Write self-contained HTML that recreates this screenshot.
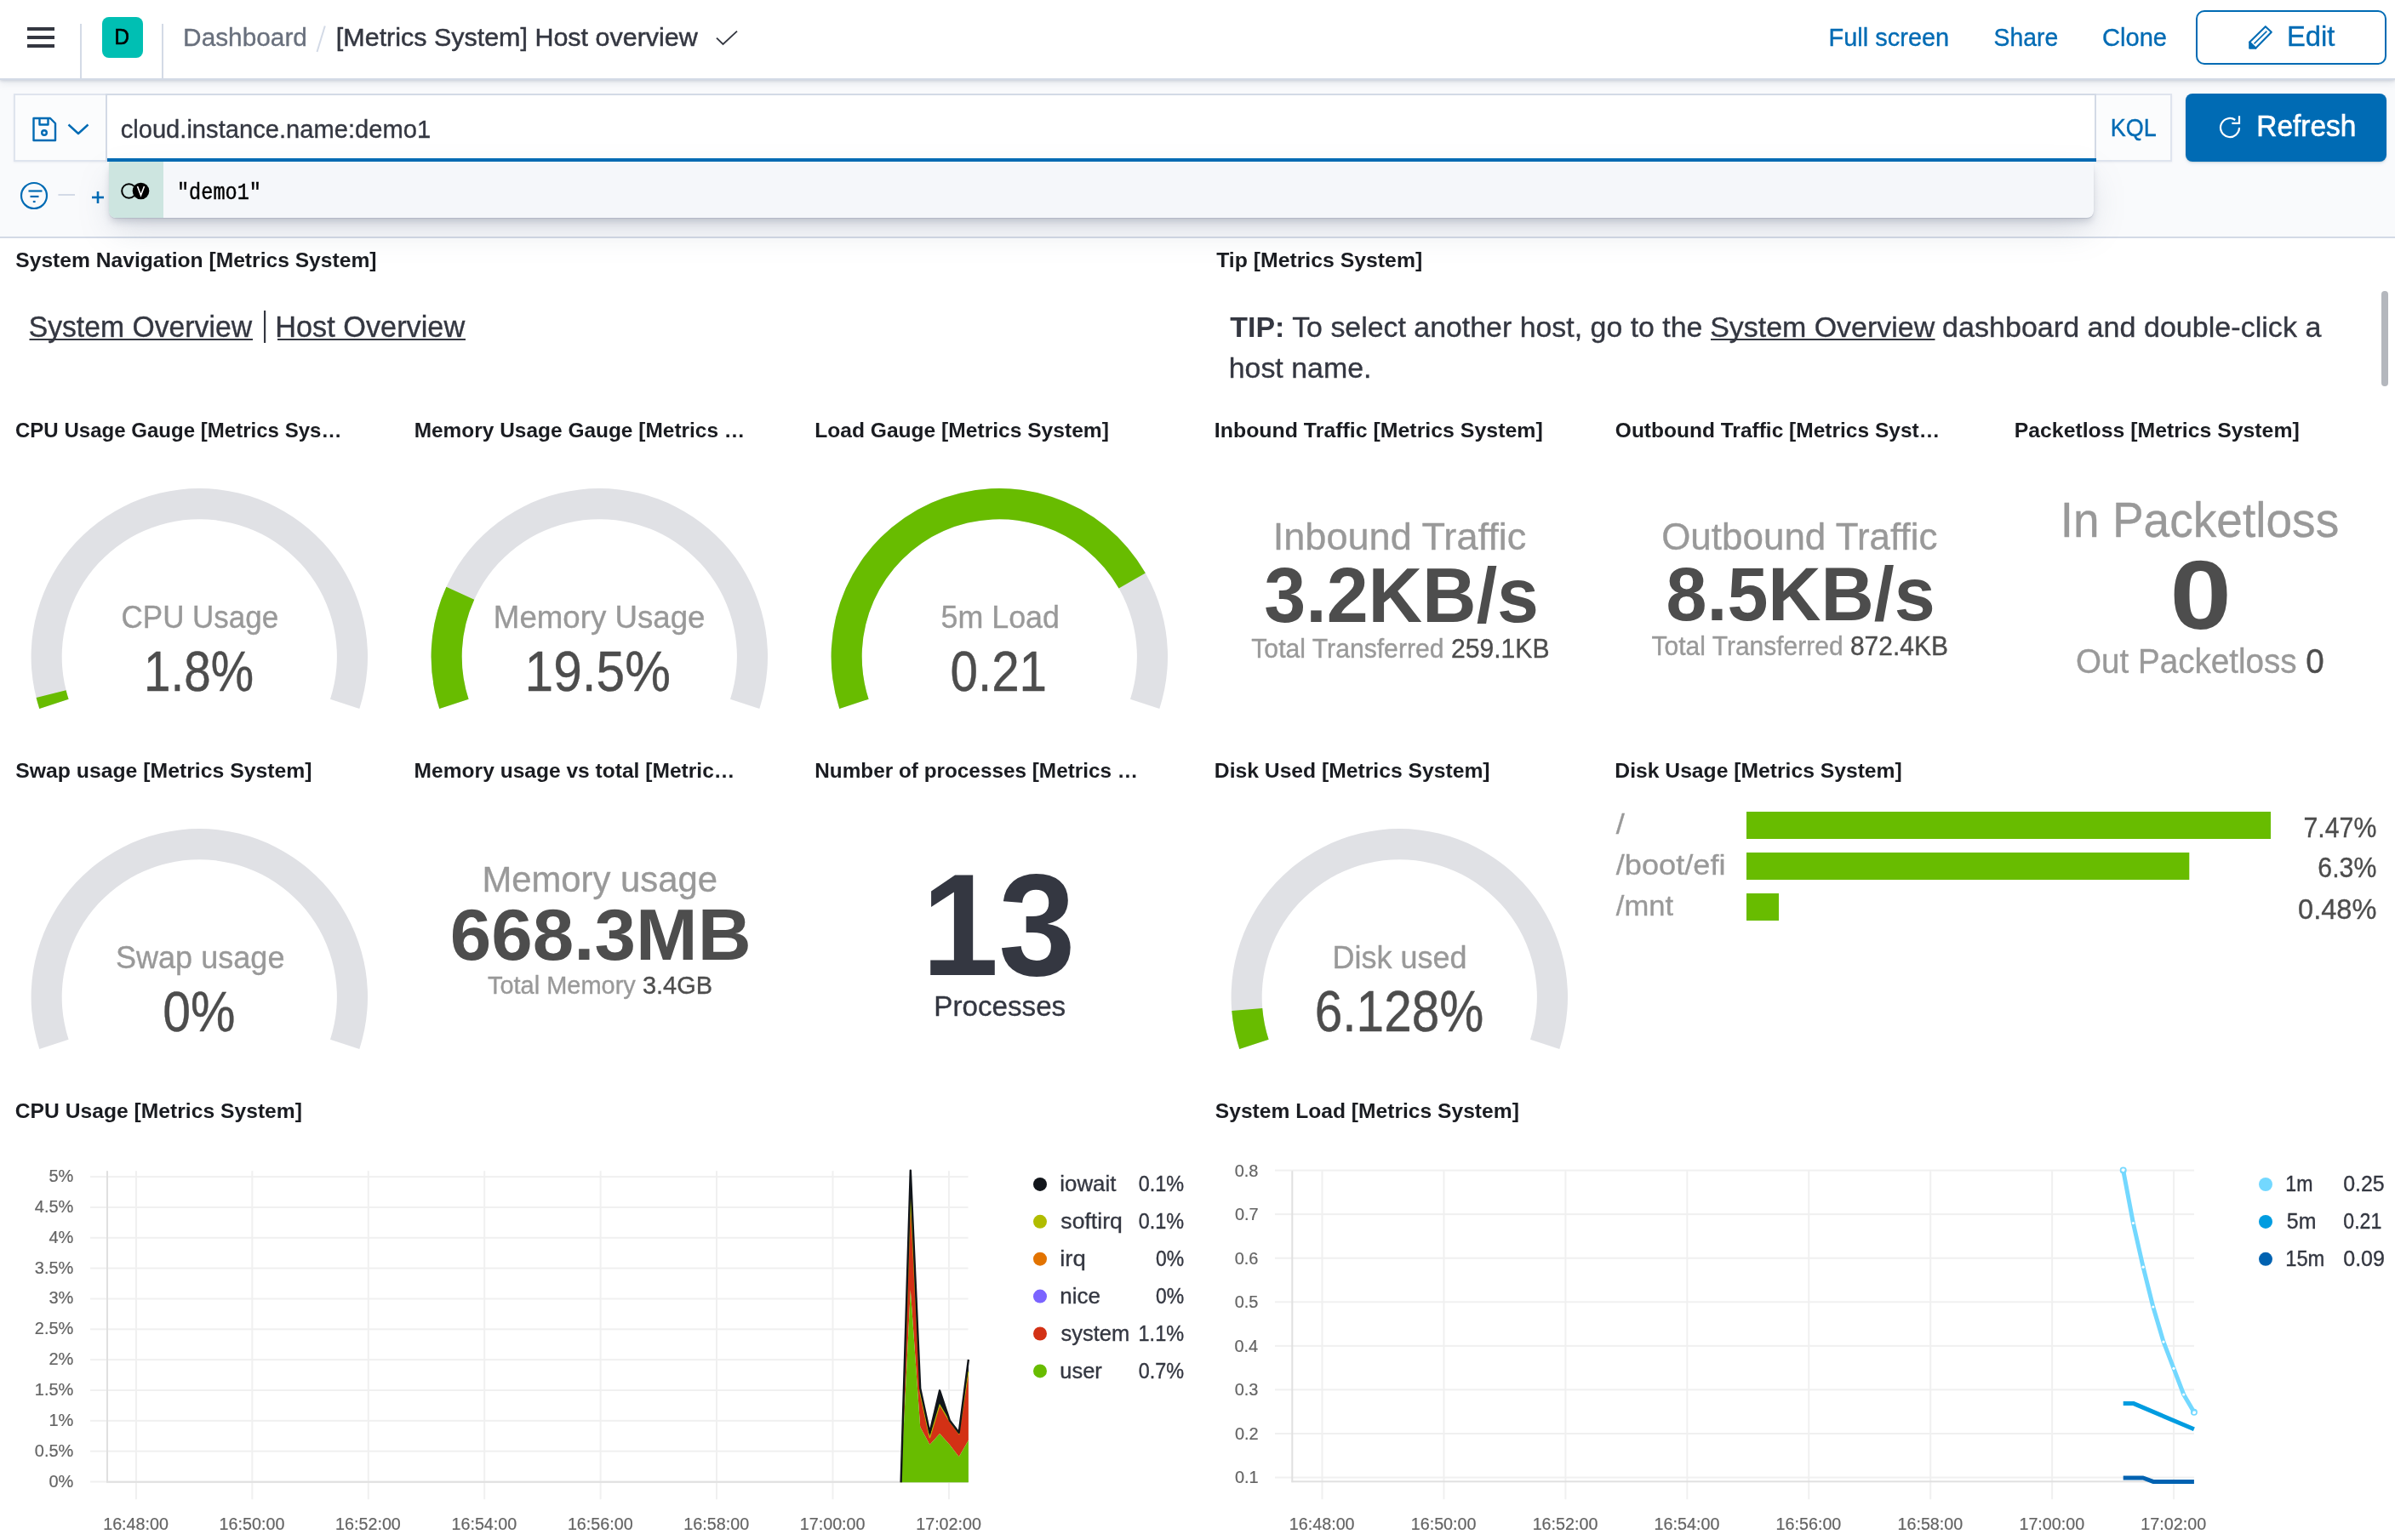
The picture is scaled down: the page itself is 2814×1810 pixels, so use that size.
<!DOCTYPE html>
<html><head><meta charset="utf-8"><title>[Metrics System] Host overview - Kibana</title>
<style>
html,body{margin:0;padding:0;width:2814px;height:1810px;overflow:hidden;background:#fff;font-family:"Liberation Sans",sans-serif}
.a{position:absolute;box-sizing:border-box}
svg{position:absolute;left:0;top:0;will-change:transform}
</style></head><body>
<div class="a" style="left:0;top:92px;width:2814px;height:188px;background:#f9fafc;border-bottom:2px solid #d3dae6"></div>
<div class="a" style="left:0;top:0;width:2814px;height:94px;background:#fff;border-bottom:2px solid #d3dae6;box-shadow:0 1px 3px rgba(130,140,160,.30),0 4px 8px rgba(130,140,160,.16)"></div>
<div class="a" style="left:16px;top:110px;width:110px;height:80px;background:#fbfcfd;border:2px solid #dfe4ee;border-right:none;box-shadow:0 1px 2px rgba(152,162,179,.15)"></div>
<div class="a" style="left:2462px;top:110px;width:90px;height:80px;background:#fbfcfd;border:2px solid #dfe4ee;border-left:none;box-shadow:0 1px 2px rgba(152,162,179,.15)"></div>
<div class="a" style="left:124px;top:110px;width:2339px;height:80px;background:#fff;border:2px solid #d3dae6;border-bottom:none;border-right:2px solid #d3dae6"></div>
<div class="a" style="left:126px;top:186px;width:2337px;height:4px;background:#006bb4"></div>
<div class="a" style="left:2568px;top:110px;width:236px;height:80px;background:#006bb4;border-radius:8px;box-shadow:0 1px 2px rgba(0,0,0,.12),0 2px 4px rgba(0,107,180,.10)"></div>
<div class="a" style="left:128px;top:190px;width:2332px;height:66px;background:#f5f7fa;border-radius:0 0 8px 8px;box-shadow:0 1px 1px rgba(120,130,150,.25),0 6px 10px -2px rgba(120,130,150,.35),0 16px 40px -6px rgba(120,130,150,.28)"></div>
<div class="a" style="left:128px;top:190px;width:64px;height:66px;background:#cde5e0;border-radius:0 0 0 8px"></div>
<svg width="2814" height="1810" viewBox="0 0 2814 1810"><defs><filter id="sh" x="-10%" y="-30%" width="120%" height="160%"><feGaussianBlur stdDeviation="2"/></filter></defs>
<rect x="32" y="32" width="32" height="4" fill="#343741"/>
<rect x="32" y="42" width="32" height="4" fill="#343741"/>
<rect x="32" y="52" width="32" height="4" fill="#343741"/>
<rect x="94" y="28" width="2" height="64" fill="#d3dae6"/>
<rect x="190" y="28" width="2" height="64" fill="#d3dae6"/>
<rect x="120" y="20" width="48" height="48" rx="8" fill="#00bfb3"/>
<line x1="381.8" y1="30.5" x2="372.5" y2="61" stroke="#d3dae6" stroke-width="2"/>
<polyline points="842,44.6 849.5,52 866,36.6" fill="none" stroke="#343741" stroke-width="1.9"/>
<rect x="2581" y="15" width="222" height="62" rx="9" fill="#000" opacity=".06" filter="url(#sh)"/><rect x="2581" y="13" width="222" height="62" rx="9" fill="#fff" stroke="#006bb4" stroke-width="2"/>
<path d="M2643.2,49.6 L2661.8,31.2 L2668.8,37.8 L2650.4,56.6 Z" fill="none" stroke="#006bb4" stroke-width="2.1" stroke-linejoin="round"/><path d="M2642.2,48.6 L2651.5,57.8 L2643.5,57.8 Q2642.2,57.8 2642.2,56.5 Z" fill="#006bb4"/><line x1="2648.5" y1="51.4" x2="2663.4" y2="36.6" stroke="#006bb4" stroke-width="1.5"/>
<g fill="none" stroke="#006bb4" stroke-width="2.4" stroke-linejoin="round"><path d="M39.5,139 L59,139 L65,145 L65,165 L39.5,165 Z"/><path d="M46.5,139 L46.5,146.5 L56.5,146.5 L56.5,139"/><circle cx="52" cy="156" r="2.8"/><polyline points="80.5,146.5 92,157 103.5,146.5"/></g>
<g fill="none" stroke="#006bb4" stroke-width="2.2"><circle cx="40" cy="230" r="15"/><line x1="33.5" y1="224.5" x2="49.5" y2="224.5"/><line x1="35.5" y1="231" x2="45.5" y2="231"/><line x1="38.8" y1="237" x2="41.6" y2="237"/></g>
<line x1="68.4" y1="229" x2="88" y2="229" stroke="#d3dae6" stroke-width="2"/>
<g stroke="#006bb4" stroke-width="2.6"><line x1="108" y1="232" x2="122" y2="232"/><line x1="115" y1="225" x2="115" y2="239"/></g>
<g fill="none" stroke="#fff" stroke-width="2.2"><path d="M2626.3,141 A11,11 0 1 0 2631,150"/><polyline points="2631,136.2 2631,144.8 2622.3,144.8"/></g>
<circle cx="151.5" cy="224.5" r="8.3" fill="none" stroke="#000" stroke-width="2"/><circle cx="165.5" cy="224.5" r="9.8" fill="#000"/><polyline points="161.5,219 165.5,229.5 169.5,219" fill="none" stroke="#fff" stroke-width="1.6"/>
<rect x="34.5" y="398" width="262.5" height="2" fill="#343741"/>
<rect x="326" y="398" width="221" height="2" fill="#343741"/>
<rect x="310" y="365" width="2.2" height="38" fill="#343741"/>
<rect x="2010" y="398" width="263.5" height="2" fill="#343741"/>
<rect x="2798" y="342" width="8" height="112" rx="4" fill="#b4b7bd"/>
<path d="M46.28,832.89 A197.7,197.7 0 1 1 422.32,832.89 L387.99,821.74 A161.6,161.6 0 1 0 80.61,821.74 Z" fill="#e0e1e5"/>
<path d="M46.28,832.89 A197.7,197.7 0 0 1 42.56,819.96 L77.57,811.17 A161.6,161.6 0 0 0 80.61,821.74 Z" fill="#68bc00"/>
<path d="M516.28,832.89 A197.7,197.7 0 1 1 892.32,832.89 L857.99,821.74 A161.6,161.6 0 1 0 550.61,821.74 Z" fill="#e0e1e5"/>
<path d="M516.28,832.89 A197.7,197.7 0 0 1 524.4,689.82 L557.25,704.79 A161.6,161.6 0 0 0 550.61,821.74 Z" fill="#68bc00"/>
<path d="M986.28,832.89 A197.7,197.7 0 1 1 1362.32,832.89 L1327.99,821.74 A161.6,161.6 0 1 0 1020.61,821.74 Z" fill="#e0e1e5"/>
<path d="M986.28,832.89 A197.7,197.7 0 0 1 1345.86,673.55 L1314.53,691.49 A161.6,161.6 0 0 0 1020.61,821.74 Z" fill="#68bc00"/>
<path d="M46.28,1232.89 A197.7,197.7 0 1 1 422.32,1232.89 L387.99,1221.74 A161.6,161.6 0 1 0 80.61,1221.74 Z" fill="#e0e1e5"/>
<path d="M1456.28,1232.89 A197.7,197.7 0 1 1 1832.32,1232.89 L1797.99,1221.74 A161.6,161.6 0 1 0 1490.61,1221.74 Z" fill="#e0e1e5"/>
<path d="M1456.28,1232.89 A197.7,197.7 0 0 1 1447.26,1188 L1483.24,1185.04 A161.6,161.6 0 0 0 1490.61,1221.74 Z" fill="#68bc00"/>
<rect x="2052" y="954" width="616" height="32" fill="#68bc00"/>
<rect x="2052" y="1002" width="520.3" height="32" fill="#68bc00"/>
<rect x="2052" y="1050" width="38" height="32" fill="#68bc00"/>
<rect x="106" y="1382.1" width="1031.5" height="2" fill="#f0f0f0"/>
<rect x="106" y="1417.94" width="1031.5" height="2" fill="#f0f0f0"/>
<rect x="106" y="1453.78" width="1031.5" height="2" fill="#f0f0f0"/>
<rect x="106" y="1489.62" width="1031.5" height="2" fill="#f0f0f0"/>
<rect x="106" y="1525.46" width="1031.5" height="2" fill="#f0f0f0"/>
<rect x="106" y="1561.3" width="1031.5" height="2" fill="#f0f0f0"/>
<rect x="106" y="1597.14" width="1031.5" height="2" fill="#f0f0f0"/>
<rect x="106" y="1632.98" width="1031.5" height="2" fill="#f0f0f0"/>
<rect x="106" y="1668.82" width="1031.5" height="2" fill="#f0f0f0"/>
<rect x="106" y="1704.66" width="1031.5" height="2" fill="#f0f0f0"/>
<rect x="106" y="1740.5" width="1031.5" height="2" fill="#f0f0f0"/>
<rect x="158.9" y="1376.2" width="2" height="386" fill="#f0f0f0"/>
<rect x="295.33" y="1376.2" width="2" height="386" fill="#f0f0f0"/>
<rect x="431.76" y="1376.2" width="2" height="386" fill="#f0f0f0"/>
<rect x="568.19" y="1376.2" width="2" height="386" fill="#f0f0f0"/>
<rect x="704.62" y="1376.2" width="2" height="386" fill="#f0f0f0"/>
<rect x="841.05" y="1376.2" width="2" height="386" fill="#f0f0f0"/>
<rect x="977.48" y="1376.2" width="2" height="386" fill="#f0f0f0"/>
<rect x="1113.91" y="1376.2" width="2" height="386" fill="#f0f0f0"/>
<rect x="125" y="1376.2" width="2" height="366" fill="#e0e0e0"/>
<rect x="125" y="1740.8" width="1012.5" height="2" fill="#e0e0e0"/>
<polygon points="1058.6,1742.2 1069.8,1375.6 1081.2,1631.7 1092.4,1683.7 1104.1,1634.3 1115.8,1669.4 1126.7,1683.7 1137.9,1597.9 1137.9,1612.2 1126.7,1685 1115.8,1670.7 1104.1,1651.2 1092.4,1690.2 1081.2,1638.2 1069.8,1406.8 1058.6,1742.2" fill="#11151a"/>
<polygon points="1058.6,1742.2 1069.8,1406.8 1081.2,1638.2 1092.4,1690.2 1104.1,1651.2 1115.8,1670.7 1126.7,1685 1137.9,1612.2 1137.9,1692.8 1126.7,1712.3 1115.8,1698 1104.1,1685 1092.4,1698 1081.2,1677.2 1069.8,1516 1058.6,1742.2" fill="#d33115"/>
<polygon points="1058.6,1742.2 1069.8,1516 1081.2,1677.2 1092.4,1698 1104.1,1685 1115.8,1698 1126.7,1712.3 1137.9,1692.8 1137.9,1742.2 1126.7,1742.2 1115.8,1742.2 1104.1,1742.2 1092.4,1742.2 1081.2,1742.2 1069.8,1742.2 1058.6,1742.2" fill="#68bc00"/>
<polyline points="1058.6,1742.2 1069.8,1406.8 1081.2,1638.2 1092.4,1690.2 1104.1,1651.2 1115.8,1670.7 1126.7,1685 1137.9,1612.2" fill="none" stroke="#b0bc00" stroke-width="1.2"/>
<polyline points="1058.6,1742.2 1069.8,1375.6 1081.2,1631.7 1092.4,1683.7 1104.1,1634.3 1115.8,1669.4 1126.7,1683.7 1137.9,1597.9" fill="none" stroke="#11151a" stroke-width="2.4" stroke-linejoin="round"/>
<circle cx="1222" cy="1391.9" r="8" fill="#11151a"/>
<circle cx="1222" cy="1435.8" r="8" fill="#b0bc00"/>
<circle cx="1222" cy="1479.7" r="8" fill="#e27300"/>
<circle cx="1222" cy="1523.6" r="8" fill="#7b64ff"/>
<circle cx="1222" cy="1567.5" r="8" fill="#d33115"/>
<circle cx="1222" cy="1611.4" r="8" fill="#68bc00"/>
<rect x="1498" y="1374.6" width="1080" height="2" fill="#f0f0f0"/>
<rect x="1498" y="1426.16" width="1080" height="2" fill="#f0f0f0"/>
<rect x="1498" y="1477.72" width="1080" height="2" fill="#f0f0f0"/>
<rect x="1498" y="1529.28" width="1080" height="2" fill="#f0f0f0"/>
<rect x="1498" y="1580.84" width="1080" height="2" fill="#f0f0f0"/>
<rect x="1498" y="1632.4" width="1080" height="2" fill="#f0f0f0"/>
<rect x="1498" y="1683.96" width="1080" height="2" fill="#f0f0f0"/>
<rect x="1498" y="1735.52" width="1080" height="2" fill="#f0f0f0"/>
<rect x="1552.5" y="1376.2" width="2" height="386" fill="#f0f0f0"/>
<rect x="1695.44" y="1376.2" width="2" height="386" fill="#f0f0f0"/>
<rect x="1838.38" y="1376.2" width="2" height="386" fill="#f0f0f0"/>
<rect x="1981.32" y="1376.2" width="2" height="386" fill="#f0f0f0"/>
<rect x="2124.26" y="1376.2" width="2" height="386" fill="#f0f0f0"/>
<rect x="2267.2" y="1376.2" width="2" height="386" fill="#f0f0f0"/>
<rect x="2410.14" y="1376.2" width="2" height="386" fill="#f0f0f0"/>
<rect x="2553.08" y="1376.2" width="2" height="386" fill="#f0f0f0"/>
<rect x="1517.3" y="1376.2" width="2" height="366" fill="#e0e0e0"/>
<rect x="1517.3" y="1740.3" width="1060.7" height="2" fill="#e0e0e0"/>
<polyline points="2494.7,1737 2518.1,1737 2529.8,1741.4 2577.9,1741.4" fill="none" stroke="#0062b1" stroke-width="5" stroke-linejoin="round"/>
<polyline points="2494.7,1649.4 2506.4,1649.4 2577.9,1679.8" fill="none" stroke="#009ce0" stroke-width="5" stroke-linejoin="round"/>
<polyline points="2494.7,1375.6 2506.4,1437.5 2518.1,1489.2 2529.8,1536 2542,1577.1 2554,1608.3 2565.7,1639 2577.9,1659.8" fill="none" stroke="#73d8ff" stroke-width="5" stroke-linejoin="round"/>
<circle cx="2494.7" cy="1375.6" r="1.6" fill="#fff"/>
<circle cx="2506.4" cy="1437.5" r="1.6" fill="#fff"/>
<circle cx="2518.1" cy="1489.2" r="1.6" fill="#fff"/>
<circle cx="2529.8" cy="1536" r="1.6" fill="#fff"/>
<circle cx="2542" cy="1577.1" r="1.6" fill="#fff"/>
<circle cx="2554" cy="1608.3" r="1.6" fill="#fff"/>
<circle cx="2565.7" cy="1639" r="1.6" fill="#fff"/>
<circle cx="2577.9" cy="1659.8" r="1.6" fill="#fff"/>
<circle cx="2494.7" cy="1375.6" r="3.2" fill="none" stroke="#73d8ff" stroke-width="1.6"/>
<circle cx="2577.9" cy="1659.8" r="3.2" fill="none" stroke="#73d8ff" stroke-width="1.6"/>
<circle cx="2662" cy="1392" r="8" fill="#73d8ff"/>
<circle cx="2662" cy="1435.9" r="8" fill="#009ce0"/>
<circle cx="2662" cy="1479.8" r="8" fill="#0062b1"/>
<text font-family="Liberation Sans" font-size="26.16" font-weight="400" fill="#000" stroke="#000" stroke-width="0.7" transform="translate(134.57,52) scale(0.9237,1)" xml:space="preserve">D</text>
<text font-family="Liberation Sans" font-size="29.65" font-weight="400" fill="#69707d"  stroke="#69707d" stroke-width="0.348" transform="translate(215.11,53.8) scale(1.0055,1)" xml:space="preserve">Dashboard</text>
<text font-family="Liberation Sans" font-size="29.65" font-weight="400" fill="#343741" stroke="#343741" stroke-width="0.5" transform="translate(394.87,53.8) scale(1.0281,1)" xml:space="preserve">[Metrics System] Host overview</text>
<text font-family="Liberation Sans" font-size="30.38" font-weight="400" fill="#006bb4"  stroke="#006bb4" stroke-width="0.367" transform="translate(2148.58,54.3) scale(0.9534,1)" xml:space="preserve">Full screen</text>
<text font-family="Liberation Sans" font-size="30.38" font-weight="400" fill="#006bb4"  stroke="#006bb4" stroke-width="0.375" transform="translate(2342.57,54.3) scale(0.9333,1)" xml:space="preserve">Share</text>
<text font-family="Liberation Sans" font-size="30.38" font-weight="400" fill="#006bb4"  stroke="#006bb4" stroke-width="0.365" transform="translate(2469.94,54.3) scale(0.9589,1)" xml:space="preserve">Clone</text>
<text font-family="Liberation Sans" font-size="34.01" font-weight="400" fill="#006bb4"  stroke="#006bb4" stroke-width="0.363" transform="translate(2686.98,53.9) scale(0.9632,1)" xml:space="preserve">Edit</text>
<text font-family="Liberation Sans" font-size="28.9" font-weight="400" fill="#343741"  stroke="#343741" stroke-width="0.347" transform="translate(141.63,161.9) scale(1.0088,1)" xml:space="preserve">cloud.instance.name:demo1</text>
<text font-family="Liberation Sans" font-size="29.94" font-weight="400" fill="#006bb4"  stroke="#006bb4" stroke-width="0.388" transform="translate(2479.64,159.8) scale(0.9024,1)" xml:space="preserve">KQL</text>
<text font-family="Liberation Sans" font-size="35.32" font-weight="400" fill="#ffffff" stroke="#ffffff" stroke-width="0.7" transform="translate(2651.33,160.3) scale(0.9456,1)" xml:space="preserve">Refresh</text>
<text font-family="Liberation Mono" font-size="27.33" font-weight="400" fill="#000" stroke="#000" stroke-width="0.45" transform="translate(207.93,234) scale(0.8636,1)" xml:space="preserve">&quot;demo1&quot;</text>
<text font-family="Liberation Sans" font-size="24.71" font-weight="700" fill="#1a1c21"  transform="translate(18.31,314.4) scale(0.9972,1)" xml:space="preserve">System Navigation [Metrics System]</text>
<text font-family="Liberation Sans" font-size="24.71" font-weight="700" fill="#1a1c21"  transform="translate(1429.15,314.4) scale(1.0035,1)" xml:space="preserve">Tip [Metrics System]</text>
<text font-family="Liberation Sans" font-size="24.71" font-weight="700" fill="#1a1c21"  transform="translate(17.94,513.7) scale(0.9736,1)" xml:space="preserve">CPU Usage Gauge [Metrics Sys…</text>
<text font-family="Liberation Sans" font-size="24.71" font-weight="700" fill="#1a1c21"  transform="translate(486.63,513.7) scale(0.9899,1)" xml:space="preserve">Memory Usage Gauge [Metrics …</text>
<text font-family="Liberation Sans" font-size="24.71" font-weight="700" fill="#1a1c21"  transform="translate(957.22,513.7) scale(0.9956,1)" xml:space="preserve">Load Gauge [Metrics System]</text>
<text font-family="Liberation Sans" font-size="24.71" font-weight="700" fill="#1a1c21"  transform="translate(1426.81,513.7) scale(1.0077,1)" xml:space="preserve">Inbound Traffic [Metrics System]</text>
<text font-family="Liberation Sans" font-size="24.71" font-weight="700" fill="#1a1c21"  transform="translate(1897.82,513.7) scale(0.9926,1)" xml:space="preserve">Outbound Traffic [Metrics Syst…</text>
<text font-family="Liberation Sans" font-size="24.71" font-weight="700" fill="#1a1c21"  transform="translate(2366.71,513.7) scale(1.0044,1)" xml:space="preserve">Packetloss [Metrics System]</text>
<text font-family="Liberation Sans" font-size="24.71" font-weight="700" fill="#1a1c21"  transform="translate(18.2,913.7) scale(1.0031,1)" xml:space="preserve">Swap usage [Metrics System]</text>
<text font-family="Liberation Sans" font-size="24.71" font-weight="700" fill="#1a1c21"  transform="translate(486.62,913.7) scale(0.9950,1)" xml:space="preserve">Memory usage vs total [Metric…</text>
<text font-family="Liberation Sans" font-size="24.71" font-weight="700" fill="#1a1c21"  transform="translate(957.24,913.7) scale(0.9849,1)" xml:space="preserve">Number of processes [Metrics …</text>
<text font-family="Liberation Sans" font-size="24.71" font-weight="700" fill="#1a1c21"  transform="translate(1426.82,913.7) scale(0.9997,1)" xml:space="preserve">Disk Used [Metrics System]</text>
<text font-family="Liberation Sans" font-size="24.71" font-weight="700" fill="#1a1c21"  transform="translate(1897.32,913.7) scale(0.9993,1)" xml:space="preserve">Disk Usage [Metrics System]</text>
<text font-family="Liberation Sans" font-size="24.71" font-weight="700" fill="#1a1c21"  transform="translate(17.71,1313.7) scale(0.9985,1)" xml:space="preserve">CPU Usage [Metrics System]</text>
<text font-family="Liberation Sans" font-size="24.71" font-weight="700" fill="#1a1c21"  transform="translate(1427.81,1313.7) scale(0.9966,1)" xml:space="preserve">System Load [Metrics System]</text>
<text font-family="Liberation Sans" font-size="34.88" font-weight="400" fill="#343741"  stroke="#343741" stroke-width="0.362" transform="translate(33.65,396) scale(0.9676,1)" xml:space="preserve">System Overview</text>
<text font-family="Liberation Sans" font-size="34.88" font-weight="400" fill="#343741"  stroke="#343741" stroke-width="0.356" transform="translate(323.26,396) scale(0.9836,1)" xml:space="preserve">Host Overview</text>
<text font-family="Liberation Sans" font-size="34.01" transform="translate(1445.36,396.1) scale(0.9970,1)" xml:space="preserve"><tspan fill="#343741" font-weight="700">TIP:</tspan><tspan fill="#343741" font-weight="400" stroke="#343741" stroke-width="0.351"> To select another host, go to the </tspan></text>
<text font-family="Liberation Sans" font-size="34.01" font-weight="400" fill="#343741"  stroke="#343741" stroke-width="0.351" transform="translate(2009.14,396.1) scale(0.9981,1)" xml:space="preserve">System Overview</text>
<text font-family="Liberation Sans" font-size="34.01" font-weight="400" fill="#343741"  stroke="#343741" stroke-width="0.349" transform="translate(2282.04,396.1) scale(1.0024,1)" xml:space="preserve">dashboard and double-click a</text>
<text font-family="Liberation Sans" font-size="34.01" font-weight="400" fill="#343741"  stroke="#343741" stroke-width="0.351" transform="translate(1443.66,443.8) scale(0.9973,1)" xml:space="preserve">host name.</text>
<text font-family="Liberation Sans" font-size="37.5" font-weight="400" fill="#999999"  stroke="#999999" stroke-width="0.375" transform="translate(142.55,737.9) scale(0.9329,1)" xml:space="preserve">CPU Usage</text>
<text font-family="Liberation Sans" font-size="67.59" font-weight="400" fill="#4d4d4d"  stroke="#4d4d4d" stroke-width="0.418" transform="translate(168.93,811.7) scale(0.8381,1)" xml:space="preserve">1.8%</text>
<text font-family="Liberation Sans" font-size="37.5" font-weight="400" fill="#999999"  stroke="#999999" stroke-width="0.358" transform="translate(579.87,737.9) scale(0.9780,1)" xml:space="preserve">Memory Usage</text>
<text font-family="Liberation Sans" font-size="67.59" font-weight="400" fill="#4d4d4d"  stroke="#4d4d4d" stroke-width="0.391" transform="translate(616.57,811.7) scale(0.8943,1)" xml:space="preserve">19.5%</text>
<text font-family="Liberation Sans" font-size="37.5" font-weight="400" fill="#999999"  stroke="#999999" stroke-width="0.366" transform="translate(1105.47,737.9) scale(0.9562,1)" xml:space="preserve">5m Load</text>
<text font-family="Liberation Sans" font-size="67.59" font-weight="400" fill="#4d4d4d"  stroke="#4d4d4d" stroke-width="0.405" transform="translate(1116.45,811.7) scale(0.8639,1)" xml:space="preserve">0.21</text>
<text font-family="Liberation Sans" font-size="37.5" font-weight="400" fill="#999999"  stroke="#999999" stroke-width="0.364" transform="translate(135.96,1137.9) scale(0.9620,1)" xml:space="preserve">Swap usage</text>
<text font-family="Liberation Sans" font-size="67.59" font-weight="400" fill="#4d4d4d"  stroke="#4d4d4d" stroke-width="0.401" transform="translate(191.13,1211.7) scale(0.8731,1)" xml:space="preserve">0%</text>
<text font-family="Liberation Sans" font-size="37.5" font-weight="400" fill="#999999"  stroke="#999999" stroke-width="0.365" transform="translate(1565.52,1137.9) scale(0.9596,1)" xml:space="preserve">Disk used</text>
<text font-family="Liberation Sans" font-size="67.59" font-weight="400" fill="#4d4d4d"  stroke="#4d4d4d" stroke-width="0.404" transform="translate(1544.77,1211.7) scale(0.8661,1)" xml:space="preserve">6.128%</text>
<text font-family="Liberation Sans" font-size="45.06" font-weight="400" fill="#999999"  stroke="#999999" stroke-width="0.350" transform="translate(1495.74,646) scale(1.0010,1)" xml:space="preserve">Inbound Traffic</text>
<text font-family="Liberation Sans" font-size="90.99" font-weight="700" fill="#4d4d4d"  transform="translate(1485.24,731.1) scale(0.9672,1)" xml:space="preserve">3.2KB/s</text>
<text font-family="Liberation Sans" font-size="31.54" transform="translate(1470.3,772.8) scale(0.9562,1)" xml:space="preserve"><tspan fill="#999999" font-weight="400" stroke="#999999" stroke-width="0.366">Total Transferred </tspan><tspan fill="#4d4d4d" font-weight="400" stroke="#4d4d4d" stroke-width="0.366">259.1KB</tspan></text>
<text font-family="Liberation Sans" font-size="45.06" font-weight="400" fill="#999999"  stroke="#999999" stroke-width="0.359" transform="translate(1952.14,645.6) scale(0.9760,1)" xml:space="preserve">Outbound Traffic</text>
<text font-family="Liberation Sans" font-size="88.66" font-weight="700" fill="#4d4d4d"  transform="translate(1957.51,728.6) scale(0.9725,1)" xml:space="preserve">8.5KB/s</text>
<text font-family="Liberation Sans" font-size="31.11" transform="translate(1940.6,770) scale(0.9643,1)" xml:space="preserve"><tspan fill="#999999" font-weight="400" stroke="#999999" stroke-width="0.363">Total Transferred </tspan><tspan fill="#4d4d4d" font-weight="400" stroke="#4d4d4d" stroke-width="0.363">872.4KB</tspan></text>
<text font-family="Liberation Sans" font-size="57.56" font-weight="400" fill="#999999"  stroke="#999999" stroke-width="0.366" transform="translate(2420.64,631) scale(0.9570,1)" xml:space="preserve">In Packetloss</text>
<text font-family="Liberation Sans" font-size="114.29" font-weight="700" fill="#4d4d4d"  transform="translate(2549.39,738.5) scale(1.1393,1)" xml:space="preserve">0</text>
<text font-family="Liberation Sans" font-size="40.55" transform="translate(2439.06,791.3) scale(0.9520,1)" xml:space="preserve"><tspan fill="#999999" font-weight="400" stroke="#999999" stroke-width="0.368">Out Packetloss </tspan><tspan fill="#4d4d4d" font-weight="400" stroke="#4d4d4d" stroke-width="0.368">0</tspan></text>
<text font-family="Liberation Sans" font-size="43.17" font-weight="400" fill="#999999"  stroke="#999999" stroke-width="0.361" transform="translate(566.45,1048.1) scale(0.9686,1)" xml:space="preserve">Memory usage</text>
<text font-family="Liberation Sans" font-size="85.47" font-weight="700" fill="#4d4d4d"  transform="translate(528.78,1127.8) scale(1.0208,1)" xml:space="preserve">668.3MB</text>
<text font-family="Liberation Sans" font-size="30.23" transform="translate(572.92,1167.8) scale(0.9586,1)" xml:space="preserve"><tspan fill="#999999" font-weight="400" stroke="#999999" stroke-width="0.365">Total Memory </tspan><tspan fill="#4d4d4d" font-weight="400" stroke="#4d4d4d" stroke-width="0.365">3.4GB</tspan></text>
<text font-family="Liberation Sans" font-size="169.77" font-weight="700" fill="#343741"  transform="translate(1082.96,1145.6) scale(0.9565,1)" xml:space="preserve">13</text>
<text font-family="Liberation Sans" font-size="33.58" font-weight="400" fill="#343741"  stroke="#343741" stroke-width="0.354" transform="translate(1097.24,1193.8) scale(0.9892,1)" xml:space="preserve">Processes</text>
<text font-family="Liberation Sans" font-size="33.87" font-weight="400" fill="#999999"  stroke="#999999" stroke-width="0.328" transform="translate(1898.8,1027.7) scale(1.0684,1)" xml:space="preserve">/boot/efi</text>
<text font-family="Liberation Sans" font-size="33.87" font-weight="400" fill="#999999"  stroke="#999999" stroke-width="0.328" transform="translate(1898.8,979.7) scale(1.0684,1)" xml:space="preserve">/</text>
<text font-family="Liberation Sans" font-size="33.87" font-weight="400" fill="#999999"  stroke="#999999" stroke-width="0.342" transform="translate(1898.8,1075.6) scale(1.0222,1)" xml:space="preserve">/mnt</text>
<text font-family="Liberation Sans" font-size="33.87" font-weight="400" fill="#4d4d4d"  stroke="#4d4d4d" stroke-width="0.391" transform="translate(2706.49,983.6) scale(0.8945,1)" xml:space="preserve">7.47%</text>
<text font-family="Liberation Sans" font-size="33.87" font-weight="400" fill="#4d4d4d"  stroke="#4d4d4d" stroke-width="0.391" transform="translate(2723.33,1031.4) scale(0.8945,1)" xml:space="preserve">6.3%</text>
<text font-family="Liberation Sans" font-size="33.87" font-weight="400" fill="#4d4d4d"  stroke="#4d4d4d" stroke-width="0.364" transform="translate(2700.02,1079.8) scale(0.9625,1)" xml:space="preserve">0.48%</text>
<text font-family="Liberation Sans" font-size="20.64" font-weight="400" fill="#646464"  stroke="#646464" stroke-width="0.207" transform="translate(57.44,1389.1) scale(0.9668,1)" xml:space="preserve">5%</text>
<text font-family="Liberation Sans" font-size="20.64" font-weight="400" fill="#646464"  stroke="#646464" stroke-width="0.207" transform="translate(40.8,1424.94) scale(0.9668,1)" xml:space="preserve">4.5%</text>
<text font-family="Liberation Sans" font-size="20.64" font-weight="400" fill="#646464"  stroke="#646464" stroke-width="0.207" transform="translate(57.44,1460.78) scale(0.9668,1)" xml:space="preserve">4%</text>
<text font-family="Liberation Sans" font-size="20.64" font-weight="400" fill="#646464"  stroke="#646464" stroke-width="0.207" transform="translate(40.8,1496.62) scale(0.9668,1)" xml:space="preserve">3.5%</text>
<text font-family="Liberation Sans" font-size="20.64" font-weight="400" fill="#646464"  stroke="#646464" stroke-width="0.207" transform="translate(57.44,1532.46) scale(0.9668,1)" xml:space="preserve">3%</text>
<text font-family="Liberation Sans" font-size="20.64" font-weight="400" fill="#646464"  stroke="#646464" stroke-width="0.207" transform="translate(40.8,1568.3) scale(0.9668,1)" xml:space="preserve">2.5%</text>
<text font-family="Liberation Sans" font-size="20.64" font-weight="400" fill="#646464"  stroke="#646464" stroke-width="0.207" transform="translate(57.44,1604.14) scale(0.9668,1)" xml:space="preserve">2%</text>
<text font-family="Liberation Sans" font-size="20.64" font-weight="400" fill="#646464"  stroke="#646464" stroke-width="0.207" transform="translate(40.8,1639.98) scale(0.9668,1)" xml:space="preserve">1.5%</text>
<text font-family="Liberation Sans" font-size="20.64" font-weight="400" fill="#646464"  stroke="#646464" stroke-width="0.207" transform="translate(57.44,1675.82) scale(0.9668,1)" xml:space="preserve">1%</text>
<text font-family="Liberation Sans" font-size="20.64" font-weight="400" fill="#646464"  stroke="#646464" stroke-width="0.207" transform="translate(40.8,1711.66) scale(0.9668,1)" xml:space="preserve">0.5%</text>
<text font-family="Liberation Sans" font-size="20.64" font-weight="400" fill="#646464"  stroke="#646464" stroke-width="0.207" transform="translate(57.44,1747.5) scale(0.9668,1)" xml:space="preserve">0%</text>
<text font-family="Liberation Sans" font-size="19.77" font-weight="400" fill="#646464"  stroke="#646464" stroke-width="0.200" transform="translate(121.17,1798.1) scale(0.9980,1)" xml:space="preserve">16:48:00</text>
<text font-family="Liberation Sans" font-size="19.77" font-weight="400" fill="#646464"  stroke="#646464" stroke-width="0.200" transform="translate(257.6,1798.1) scale(0.9980,1)" xml:space="preserve">16:50:00</text>
<text font-family="Liberation Sans" font-size="19.77" font-weight="400" fill="#646464"  stroke="#646464" stroke-width="0.200" transform="translate(394.03,1798.1) scale(0.9980,1)" xml:space="preserve">16:52:00</text>
<text font-family="Liberation Sans" font-size="19.77" font-weight="400" fill="#646464"  stroke="#646464" stroke-width="0.200" transform="translate(530.46,1798.1) scale(0.9980,1)" xml:space="preserve">16:54:00</text>
<text font-family="Liberation Sans" font-size="19.77" font-weight="400" fill="#646464"  stroke="#646464" stroke-width="0.200" transform="translate(666.89,1798.1) scale(0.9980,1)" xml:space="preserve">16:56:00</text>
<text font-family="Liberation Sans" font-size="19.77" font-weight="400" fill="#646464"  stroke="#646464" stroke-width="0.200" transform="translate(803.32,1798.1) scale(0.9980,1)" xml:space="preserve">16:58:00</text>
<text font-family="Liberation Sans" font-size="19.77" font-weight="400" fill="#646464"  stroke="#646464" stroke-width="0.200" transform="translate(939.75,1798.1) scale(0.9980,1)" xml:space="preserve">17:00:00</text>
<text font-family="Liberation Sans" font-size="19.77" font-weight="400" fill="#646464"  stroke="#646464" stroke-width="0.200" transform="translate(1076.18,1798.1) scale(0.9980,1)" xml:space="preserve">17:02:00</text>
<text font-family="Liberation Sans" font-size="25.15" font-weight="400" fill="#343741"  stroke="#343741" stroke-width="0.341" transform="translate(1245.35,1400) scale(1.0265,1)" xml:space="preserve">iowait</text>
<text font-family="Liberation Sans" font-size="25.15" font-weight="400" fill="#343741"  stroke="#343741" stroke-width="0.376" transform="translate(1337.7,1400) scale(0.9314,1)" xml:space="preserve">0.1%</text>
<text font-family="Liberation Sans" font-size="25.15" font-weight="400" fill="#343741"  stroke="#343741" stroke-width="0.331" transform="translate(1246.37,1443.9) scale(1.0577,1)" xml:space="preserve">softirq</text>
<text font-family="Liberation Sans" font-size="25.15" font-weight="400" fill="#343741"  stroke="#343741" stroke-width="0.376" transform="translate(1337.7,1443.9) scale(0.9314,1)" xml:space="preserve">0.1%</text>
<text font-family="Liberation Sans" font-size="25.15" font-weight="400" fill="#343741"  stroke="#343741" stroke-width="0.320" transform="translate(1245.25,1487.8) scale(1.0949,1)" xml:space="preserve">irq</text>
<text font-family="Liberation Sans" font-size="25.15" font-weight="400" fill="#343741"  stroke="#343741" stroke-width="0.384" transform="translate(1357.91,1487.8) scale(0.9123,1)" xml:space="preserve">0%</text>
<text font-family="Liberation Sans" font-size="25.15" font-weight="400" fill="#343741"  stroke="#343741" stroke-width="0.339" transform="translate(1245.34,1531.7) scale(1.0318,1)" xml:space="preserve">nice</text>
<text font-family="Liberation Sans" font-size="25.15" font-weight="400" fill="#343741"  stroke="#343741" stroke-width="0.384" transform="translate(1357.91,1531.7) scale(0.9123,1)" xml:space="preserve">0%</text>
<text font-family="Liberation Sans" font-size="25.15" font-weight="400" fill="#343741"  stroke="#343741" stroke-width="0.344" transform="translate(1246.39,1575.6) scale(1.0161,1)" xml:space="preserve">system</text>
<text font-family="Liberation Sans" font-size="25.15" font-weight="400" fill="#343741"  stroke="#343741" stroke-width="0.375" transform="translate(1337.56,1575.6) scale(0.9339,1)" xml:space="preserve">1.1%</text>
<text font-family="Liberation Sans" font-size="25.15" font-weight="400" fill="#343741"  stroke="#343741" stroke-width="0.346" transform="translate(1245.37,1619.5) scale(1.0110,1)" xml:space="preserve">user</text>
<text font-family="Liberation Sans" font-size="25.15" font-weight="400" fill="#343741"  stroke="#343741" stroke-width="0.376" transform="translate(1337.7,1619.5) scale(0.9314,1)" xml:space="preserve">0.7%</text>
<text font-family="Liberation Sans" font-size="20.64" font-weight="400" fill="#646464"  stroke="#646464" stroke-width="0.207" transform="translate(1450.68,1382.5) scale(0.9668,1)" xml:space="preserve">0.8</text>
<text font-family="Liberation Sans" font-size="20.64" font-weight="400" fill="#646464"  stroke="#646464" stroke-width="0.207" transform="translate(1450.88,1434.06) scale(0.9668,1)" xml:space="preserve">0.7</text>
<text font-family="Liberation Sans" font-size="20.64" font-weight="400" fill="#646464"  stroke="#646464" stroke-width="0.207" transform="translate(1450.68,1485.62) scale(0.9668,1)" xml:space="preserve">0.6</text>
<text font-family="Liberation Sans" font-size="20.64" font-weight="400" fill="#646464"  stroke="#646464" stroke-width="0.207" transform="translate(1450.68,1537.18) scale(0.9668,1)" xml:space="preserve">0.5</text>
<text font-family="Liberation Sans" font-size="20.64" font-weight="400" fill="#646464"  stroke="#646464" stroke-width="0.207" transform="translate(1450.48,1588.74) scale(0.9668,1)" xml:space="preserve">0.4</text>
<text font-family="Liberation Sans" font-size="20.64" font-weight="400" fill="#646464"  stroke="#646464" stroke-width="0.207" transform="translate(1450.68,1640.3) scale(0.9668,1)" xml:space="preserve">0.3</text>
<text font-family="Liberation Sans" font-size="20.64" font-weight="400" fill="#646464"  stroke="#646464" stroke-width="0.207" transform="translate(1450.88,1691.86) scale(0.9668,1)" xml:space="preserve">0.2</text>
<text font-family="Liberation Sans" font-size="20.64" font-weight="400" fill="#646464"  stroke="#646464" stroke-width="0.207" transform="translate(1450.88,1743.42) scale(0.9668,1)" xml:space="preserve">0.1</text>
<text font-family="Liberation Sans" font-size="19.77" font-weight="400" fill="#646464"  stroke="#646464" stroke-width="0.200" transform="translate(1514.77,1798.1) scale(0.9980,1)" xml:space="preserve">16:48:00</text>
<text font-family="Liberation Sans" font-size="19.77" font-weight="400" fill="#646464"  stroke="#646464" stroke-width="0.200" transform="translate(1657.71,1798.1) scale(0.9980,1)" xml:space="preserve">16:50:00</text>
<text font-family="Liberation Sans" font-size="19.77" font-weight="400" fill="#646464"  stroke="#646464" stroke-width="0.200" transform="translate(1800.65,1798.1) scale(0.9980,1)" xml:space="preserve">16:52:00</text>
<text font-family="Liberation Sans" font-size="19.77" font-weight="400" fill="#646464"  stroke="#646464" stroke-width="0.200" transform="translate(1943.59,1798.1) scale(0.9980,1)" xml:space="preserve">16:54:00</text>
<text font-family="Liberation Sans" font-size="19.77" font-weight="400" fill="#646464"  stroke="#646464" stroke-width="0.200" transform="translate(2086.53,1798.1) scale(0.9980,1)" xml:space="preserve">16:56:00</text>
<text font-family="Liberation Sans" font-size="19.77" font-weight="400" fill="#646464"  stroke="#646464" stroke-width="0.200" transform="translate(2229.47,1798.1) scale(0.9980,1)" xml:space="preserve">16:58:00</text>
<text font-family="Liberation Sans" font-size="19.77" font-weight="400" fill="#646464"  stroke="#646464" stroke-width="0.200" transform="translate(2372.41,1798.1) scale(0.9980,1)" xml:space="preserve">17:00:00</text>
<text font-family="Liberation Sans" font-size="19.77" font-weight="400" fill="#646464"  stroke="#646464" stroke-width="0.200" transform="translate(2515.35,1798.1) scale(0.9980,1)" xml:space="preserve">17:02:00</text>
<text font-family="Liberation Sans" font-size="25.15" font-weight="400" fill="#343741"  stroke="#343741" stroke-width="0.380" transform="translate(2685.28,1400) scale(0.9213,1)" xml:space="preserve">1m</text>
<text font-family="Liberation Sans" font-size="25.15" font-weight="400" fill="#343741"  stroke="#343741" stroke-width="0.354" transform="translate(2753.25,1400) scale(0.9899,1)" xml:space="preserve">0.25</text>
<text font-family="Liberation Sans" font-size="25.15" font-weight="400" fill="#343741"  stroke="#343741" stroke-width="0.354" transform="translate(2686.8,1443.9) scale(0.9894,1)" xml:space="preserve">5m</text>
<text font-family="Liberation Sans" font-size="25.15" font-weight="400" fill="#343741"  stroke="#343741" stroke-width="0.381" transform="translate(2753.31,1443.9) scale(0.9186,1)" xml:space="preserve">0.21</text>
<text font-family="Liberation Sans" font-size="25.15" font-weight="400" fill="#343741"  stroke="#343741" stroke-width="0.371" transform="translate(2685.24,1487.8) scale(0.9436,1)" xml:space="preserve">15m</text>
<text font-family="Liberation Sans" font-size="25.15" font-weight="400" fill="#343741"  stroke="#343741" stroke-width="0.352" transform="translate(2753.25,1487.8) scale(0.9952,1)" xml:space="preserve">0.09</text>
</svg>
</body></html>
